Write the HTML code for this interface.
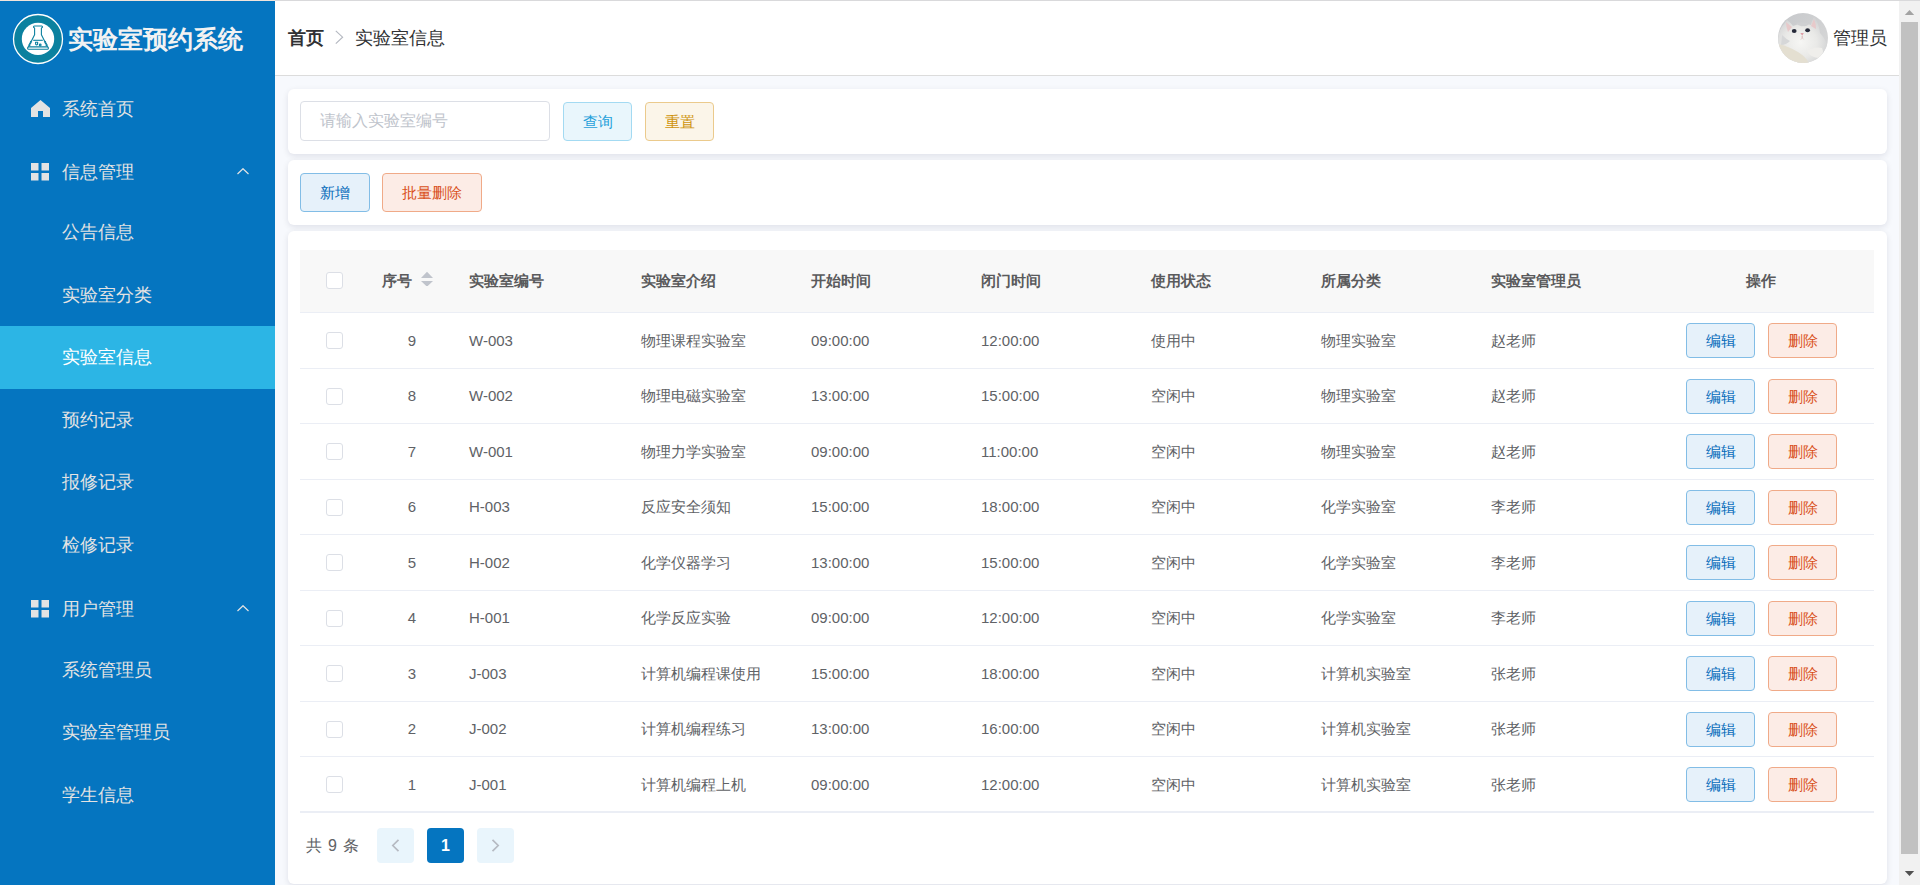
<!DOCTYPE html>
<html><head><meta charset="utf-8">
<style>
*{box-sizing:border-box;margin:0;padding:0}
html,body{width:1920px;height:885px;overflow:hidden;font-family:"Liberation Sans",sans-serif;background:#f7f9fd}
.abs{position:absolute}
#topline{position:absolute;left:0;top:0;width:1920px;height:1px;background:#d9d9db;z-index:10}
#topline .l{position:absolute;left:0;top:0;width:275px;height:1px;background:#f1e4dc}
#side{position:absolute;left:0;top:0;width:275px;height:885px;background:#0575c0}
.logo{position:absolute;left:13px;top:14px;width:50px;height:50px;border-radius:50%;background:#0b7f9f;border:1.5px solid #fff}
.logo .in{position:absolute;left:8px;top:8px;width:32px;height:32px;border-radius:50%;background:#fff}
.logotxt{position:absolute;left:68px;top:20px;font-size:25px;font-weight:bold;color:#f2f2f2;line-height:38px;white-space:nowrap}
.mi{position:absolute;left:0;width:275px;height:63px;color:#e3e3e3;font-size:18px;line-height:63px;white-space:nowrap}
.mi span{position:absolute;left:62px;top:0}
.mi.act{background:#2cb5e5;color:#fff}
.mi svg{position:absolute}
#header{position:absolute;left:275px;top:0;width:1624px;height:76px;background:#fff;border-bottom:1px solid #dcdcdc}
.bc1{position:absolute;left:13px;top:19px;font-size:18px;font-weight:bold;color:#303133;line-height:38px}
.bc2{position:absolute;left:80px;top:19px;font-size:18px;color:#303133;line-height:38px}
.card{position:absolute;left:288px;width:1599px;background:#fff;border-radius:6px;box-shadow:0 2px 6px rgba(10,10,50,0.1)}
.btn{position:absolute;height:39px;border-width:1px;border-style:solid;border-radius:4px;font-size:15px;text-align:center;line-height:37px;white-space:nowrap}
.b-cyan{background:#e9f6fc;border-color:#a3daf2;color:#1fa0da}
.b-yel{background:#fbf5e9;border-color:#ebca8c;color:#cf930c}
.b-blue{background:#e6f1fa;border-color:#82bde6;color:#066cba}
.b-red{background:#fcece6;border-color:#f0aa88;color:#d9501a}

.tbl{position:absolute;left:300px;top:0;width:1574px;height:885px}
.thead{position:absolute;left:0;top:250px;width:1574px;height:63px;background:#f8f8f8;border-bottom:1px solid #ebeef5}
.th{position:absolute;top:0;line-height:62px;font-size:15px;font-weight:bold;color:#5a5a5c;white-space:nowrap}
.tr{position:absolute;left:0;width:1574px;border-bottom:1px solid #ebeef5}
.td{position:absolute;top:0;font-size:15px;color:#606266;white-space:nowrap}
.td.num{left:82px;width:60px;text-align:center}
.cb{position:absolute;width:17px;height:17px;border:1px solid #dcdfe6;border-radius:3px;background:#fff}
.btn2{position:absolute;width:69px;height:35px;border-width:1px;border-style:solid;border-radius:4px;font-size:15px;text-align:center;line-height:33px;white-space:nowrap}
.pg{position:absolute;top:828px;width:37px;height:35px;border-radius:4px;background:#e9f5fc}
#scroll{position:absolute;left:1899px;top:1px;width:21px;height:884px;background:#f1f1f1}
#thumb{position:absolute;left:2px;top:21px;width:17px;height:832px;background:#c1c1c1}
</style></head><body>
<div id="topline"><div class="l"></div></div>
<div id="side">
  <svg class="abs" style="left:0;top:0" width="80" height="80" viewBox="0 0 80 80">
<circle cx="38" cy="39" r="24.5" fill="#0b819f" stroke="#fff" stroke-width="1.3"/>
<circle cx="38" cy="38.9" r="16.2" fill="#fff"/>
<g fill="none" stroke="#0b819f" stroke-width="1.1" stroke-linejoin="round">
<path d="M34.4 26 L41.6 26 Q42.7 26.2 42.4 27.3 L41.4 28.1 L41.4 34.8 L47.6 46.9 M34.4 26 Q33.3 26.2 33.6 27.3 L34.6 28.1 L34.6 34.8 L28.4 46.9"/>
<rect x="27.6" y="46.9" width="20.8" height="2.4" rx="1"/>
<path d="M33.2 40.3 L42.8 40.3"/>
<path d="M35.5 42.3 L37.7 42.3 L37.5 44.4 Q36.6 45.3 35.7 44.4 Z"/>
<circle cx="40.2" cy="45" r="0.9"/>
</g>
<g stroke="#0b819f" stroke-width="2.2" stroke-dasharray="1.1 0.9">
<path d="M31.3 41.2 L29 45.9"/>
<path d="M44.7 41.2 L47 45.9"/>
</g>
</svg>
  <div class="logotxt">实验室预约系统</div>
  <div class="mi" style="top:78px"><svg style="left:31px;top:22px" width="19" height="18" viewBox="0 0 19 18"><path d="M9.5 0 L19 8 L19 17 L12 17 L12 11 L7 11 L7 17 L0 17 L0 8 Z" fill="#e3e3e3"/></svg><span>系统首页</span></div>
  <div class="mi" style="top:141px"><svg style="left:31px;top:22px" width="19" height="18" viewBox="0 0 19 18"><rect x="0" y="0" width="7.5" height="7.5" fill="#e3e3e3"/><rect x="10.5" y="0" width="7.5" height="7.5" fill="#e3e3e3"/><rect x="0" y="10" width="7.5" height="7.5" fill="#e3e3e3"/><rect x="10.5" y="10" width="7.5" height="7.5" fill="#e3e3e3"/></svg><span>信息管理</span><svg style="left:237px;top:27px" width="12" height="7" viewBox="0 0 12 7"><path d="M0.5 6 L6 0.7 L11.5 6" stroke="#e3e3e3" stroke-width="1.2" fill="none"/></svg></div>
  <div class="mi" style="top:201px"><span>公告信息</span></div>
  <div class="mi" style="top:264px"><span>实验室分类</span></div>
  <div class="mi act" style="top:326px"><span>实验室信息</span></div>
  <div class="mi" style="top:389px"><span>预约记录</span></div>
  <div class="mi" style="top:451px"><span>报修记录</span></div>
  <div class="mi" style="top:514px"><span>检修记录</span></div>
  <div class="mi" style="top:578px"><svg style="left:31px;top:22px" width="19" height="18" viewBox="0 0 19 18"><rect x="0" y="0" width="7.5" height="7.5" fill="#e3e3e3"/><rect x="10.5" y="0" width="7.5" height="7.5" fill="#e3e3e3"/><rect x="0" y="10" width="7.5" height="7.5" fill="#e3e3e3"/><rect x="10.5" y="10" width="7.5" height="7.5" fill="#e3e3e3"/></svg><span>用户管理</span><svg style="left:237px;top:27px" width="12" height="7" viewBox="0 0 12 7"><path d="M0.5 6 L6 0.7 L11.5 6" stroke="#e3e3e3" stroke-width="1.2" fill="none"/></svg></div>
  <div class="mi" style="top:639px"><span>系统管理员</span></div>
  <div class="mi" style="top:701px"><span>实验室管理员</span></div>
  <div class="mi" style="top:764px"><span>学生信息</span></div>
</div>
<div id="header">
  <div class="bc1">首页</div>
  <div class="bc2">实验室信息</div>
  <svg class="abs" style="left:60px;top:30px" width="9" height="15" viewBox="0 0 9 15"><path d="M0.8 0.8 L7.6 7.2 L0.8 13.6" stroke="#b4b8c0" stroke-width="1.15" fill="none"/></svg>
  <svg class="abs" style="left:1503px;top:13px" width="50" height="50" viewBox="0 0 50 50">
   <defs><clipPath id="cc"><circle cx="25" cy="25" r="25"/></clipPath>
   <radialGradient id="face" cx="0.45" cy="0.55" r="0.55"><stop offset="0" stop-color="#f6f6f4"/><stop offset="0.6" stop-color="#e9e9e7"/><stop offset="1" stop-color="#d4d5d6"/></radialGradient>
   <linearGradient id="bg" x1="0" y1="0" x2="1" y2="1"><stop offset="0" stop-color="#c6c8cb"/><stop offset="1" stop-color="#d9d9d9"/></linearGradient></defs>
   <g clip-path="url(#cc)">
    <rect width="50" height="50" fill="url(#bg)"/>
    <path d="M0 26 Q1 16 6 11 L9 7 Q12 9 15 13 Q24 9 33 12 Q34 7 36 4 Q41 10 42 20 Q50 28 50 40 L50 50 L0 50 Z" fill="url(#face)"/>
    <path d="M18 10 Q25 8 31 11 Q28 14 25 13 Q21 14 18 10 Z" fill="#cfd0d2"/>
    <path d="M4 22 Q8 26 12 28 Q8 32 3 32 Z" fill="#d6d7d8"/>
    <path d="M8 9 L14 14 L10 19 Q8 14 8 9 Z" fill="#e7c9ca"/>
    <path d="M36 6 L33 13 L38 16 Q38 10 36 6 Z" fill="#e7c9ca"/>
    <path d="M0 31 Q10 33 20 39 Q28 44 31 50 L0 50 Z" fill="#e4dfd1"/>
    <path d="M29 38 Q37 33 44 35 Q47 41 41 45 Q33 45 29 38 Z" fill="#efeeeb"/>
    <ellipse cx="16.2" cy="18" rx="2.4" ry="2" fill="#262a3a"/>
    <ellipse cx="29.6" cy="17.2" rx="2.4" ry="2" fill="#262a3a"/>
    <path d="M22.3 20 L25.9 20 L24.2 22.8 Z" fill="#dea0a8"/>
    <path d="M24.2 23 Q24 26 22.8 26.6 M24.2 23 Q24.5 26 25.6 26.4" stroke="#d9b4b4" stroke-width="0.6" fill="none"/>
   </g>
  </svg>
  <div class="abs" style="left:1558px;top:19px;font-size:18px;line-height:38px;color:#303133;white-space:nowrap">管理员</div>
</div>
<div class="card" style="top:89px;height:65px">
  <div class="abs" style="left:12px;top:12px;width:250px;height:40px;border:1px solid #dcdfe6;border-radius:4px"><span class="abs" style="left:19px;top:9px;font-size:16px;color:#c0c4cc;line-height:20px;white-space:nowrap">请输入实验室编号</span></div>
  <div class="btn b-cyan" style="left:275px;top:13px;width:69px">查询</div>
  <div class="btn b-yel" style="left:357px;top:13px;width:69px">重置</div>
</div>
<div class="card" style="top:160px;height:65px">
  <div class="btn b-blue" style="left:12px;top:13px;width:70px">新增</div>
  <div class="btn b-red" style="left:94px;top:13px;width:100px">批量删除</div>
</div>
<div class="card" style="top:231px;height:653px"></div>
<div class="tbl">
<div class="thead">
<div class="cb" style="left:26px;top:22px"></div>
<span class="th" style="left:82px">序号</span>
<svg class="abs" style="left:121px;top:21px" width="12" height="15" viewBox="0 0 12 15"><path d="M6 0.8 L12 6.9 L0 6.9 Z M0 9.9 L12 9.9 L6 15.7 Z" fill="#c0c4cc"/></svg>
<span class="th" style="left:169px">实验室编号</span>
<span class="th" style="left:341px">实验室介绍</span>
<span class="th" style="left:511px">开始时间</span>
<span class="th" style="left:681px">闭门时间</span>
<span class="th" style="left:851px">使用状态</span>
<span class="th" style="left:1021px">所属分类</span>
<span class="th" style="left:1191px">实验室管理员</span>
<span class="th" style="left:1446px">操作</span>
</div>
<div class="tr" style="top:313px;height:56px">
<div class="cb" style="left:26px;top:19px"></div>
<span class="td num" style="line-height:55px">9</span>
<span class="td" style="left:169px;line-height:55px">W-003</span>
<span class="td" style="left:341px;line-height:55px">物理课程实验室</span>
<span class="td" style="left:511px;line-height:55px">09:00:00</span>
<span class="td" style="left:681px;line-height:55px">12:00:00</span>
<span class="td" style="left:851px;line-height:55px">使用中</span>
<span class="td" style="left:1021px;line-height:55px">物理实验室</span>
<span class="td" style="left:1191px;line-height:55px">赵老师</span>
<div class="btn2 b-blue" style="left:1386px;top:10px">编辑</div>
<div class="btn2 b-red" style="left:1468px;top:10px">删除</div>
</div>
<div class="tr" style="top:369px;height:55px">
<div class="cb" style="left:26px;top:19px"></div>
<span class="td num" style="line-height:54px">8</span>
<span class="td" style="left:169px;line-height:54px">W-002</span>
<span class="td" style="left:341px;line-height:54px">物理电磁实验室</span>
<span class="td" style="left:511px;line-height:54px">13:00:00</span>
<span class="td" style="left:681px;line-height:54px">15:00:00</span>
<span class="td" style="left:851px;line-height:54px">空闲中</span>
<span class="td" style="left:1021px;line-height:54px">物理实验室</span>
<span class="td" style="left:1191px;line-height:54px">赵老师</span>
<div class="btn2 b-blue" style="left:1386px;top:10px">编辑</div>
<div class="btn2 b-red" style="left:1468px;top:10px">删除</div>
</div>
<div class="tr" style="top:424px;height:56px">
<div class="cb" style="left:26px;top:19px"></div>
<span class="td num" style="line-height:55px">7</span>
<span class="td" style="left:169px;line-height:55px">W-001</span>
<span class="td" style="left:341px;line-height:55px">物理力学实验室</span>
<span class="td" style="left:511px;line-height:55px">09:00:00</span>
<span class="td" style="left:681px;line-height:55px">11:00:00</span>
<span class="td" style="left:851px;line-height:55px">空闲中</span>
<span class="td" style="left:1021px;line-height:55px">物理实验室</span>
<span class="td" style="left:1191px;line-height:55px">赵老师</span>
<div class="btn2 b-blue" style="left:1386px;top:10px">编辑</div>
<div class="btn2 b-red" style="left:1468px;top:10px">删除</div>
</div>
<div class="tr" style="top:480px;height:55px">
<div class="cb" style="left:26px;top:19px"></div>
<span class="td num" style="line-height:54px">6</span>
<span class="td" style="left:169px;line-height:54px">H-003</span>
<span class="td" style="left:341px;line-height:54px">反应安全须知</span>
<span class="td" style="left:511px;line-height:54px">15:00:00</span>
<span class="td" style="left:681px;line-height:54px">18:00:00</span>
<span class="td" style="left:851px;line-height:54px">空闲中</span>
<span class="td" style="left:1021px;line-height:54px">化学实验室</span>
<span class="td" style="left:1191px;line-height:54px">李老师</span>
<div class="btn2 b-blue" style="left:1386px;top:10px">编辑</div>
<div class="btn2 b-red" style="left:1468px;top:10px">删除</div>
</div>
<div class="tr" style="top:535px;height:56px">
<div class="cb" style="left:26px;top:19px"></div>
<span class="td num" style="line-height:55px">5</span>
<span class="td" style="left:169px;line-height:55px">H-002</span>
<span class="td" style="left:341px;line-height:55px">化学仪器学习</span>
<span class="td" style="left:511px;line-height:55px">13:00:00</span>
<span class="td" style="left:681px;line-height:55px">15:00:00</span>
<span class="td" style="left:851px;line-height:55px">空闲中</span>
<span class="td" style="left:1021px;line-height:55px">化学实验室</span>
<span class="td" style="left:1191px;line-height:55px">李老师</span>
<div class="btn2 b-blue" style="left:1386px;top:10px">编辑</div>
<div class="btn2 b-red" style="left:1468px;top:10px">删除</div>
</div>
<div class="tr" style="top:591px;height:55px">
<div class="cb" style="left:26px;top:19px"></div>
<span class="td num" style="line-height:54px">4</span>
<span class="td" style="left:169px;line-height:54px">H-001</span>
<span class="td" style="left:341px;line-height:54px">化学反应实验</span>
<span class="td" style="left:511px;line-height:54px">09:00:00</span>
<span class="td" style="left:681px;line-height:54px">12:00:00</span>
<span class="td" style="left:851px;line-height:54px">空闲中</span>
<span class="td" style="left:1021px;line-height:54px">化学实验室</span>
<span class="td" style="left:1191px;line-height:54px">李老师</span>
<div class="btn2 b-blue" style="left:1386px;top:10px">编辑</div>
<div class="btn2 b-red" style="left:1468px;top:10px">删除</div>
</div>
<div class="tr" style="top:646px;height:56px">
<div class="cb" style="left:26px;top:19px"></div>
<span class="td num" style="line-height:55px">3</span>
<span class="td" style="left:169px;line-height:55px">J-003</span>
<span class="td" style="left:341px;line-height:55px">计算机编程课使用</span>
<span class="td" style="left:511px;line-height:55px">15:00:00</span>
<span class="td" style="left:681px;line-height:55px">18:00:00</span>
<span class="td" style="left:851px;line-height:55px">空闲中</span>
<span class="td" style="left:1021px;line-height:55px">计算机实验室</span>
<span class="td" style="left:1191px;line-height:55px">张老师</span>
<div class="btn2 b-blue" style="left:1386px;top:10px">编辑</div>
<div class="btn2 b-red" style="left:1468px;top:10px">删除</div>
</div>
<div class="tr" style="top:702px;height:55px">
<div class="cb" style="left:26px;top:19px"></div>
<span class="td num" style="line-height:54px">2</span>
<span class="td" style="left:169px;line-height:54px">J-002</span>
<span class="td" style="left:341px;line-height:54px">计算机编程练习</span>
<span class="td" style="left:511px;line-height:54px">13:00:00</span>
<span class="td" style="left:681px;line-height:54px">16:00:00</span>
<span class="td" style="left:851px;line-height:54px">空闲中</span>
<span class="td" style="left:1021px;line-height:54px">计算机实验室</span>
<span class="td" style="left:1191px;line-height:54px">张老师</span>
<div class="btn2 b-blue" style="left:1386px;top:10px">编辑</div>
<div class="btn2 b-red" style="left:1468px;top:10px">删除</div>
</div>
<div class="tr" style="top:757px;height:56px">
<div class="cb" style="left:26px;top:19px"></div>
<span class="td num" style="line-height:55px">1</span>
<span class="td" style="left:169px;line-height:55px">J-001</span>
<span class="td" style="left:341px;line-height:55px">计算机编程上机</span>
<span class="td" style="left:511px;line-height:55px">09:00:00</span>
<span class="td" style="left:681px;line-height:55px">12:00:00</span>
<span class="td" style="left:851px;line-height:55px">空闲中</span>
<span class="td" style="left:1021px;line-height:55px">计算机实验室</span>
<span class="td" style="left:1191px;line-height:55px">张老师</span>
<div class="btn2 b-blue" style="left:1386px;top:10px">编辑</div>
<div class="btn2 b-red" style="left:1468px;top:10px">删除</div>
</div>
<div class="abs" style="left:0;top:811px;width:1574px;height:1px;background:#ebeef5"></div>
</div>
<span class="abs" style="left:306px;top:834px;font-size:16px;line-height:24px;color:#606266;white-space:nowrap;word-spacing:1.5px">共 9 条</span>
<div class="pg" style="left:377px"><svg class="abs" style="left:14px;top:11px" width="9" height="13" viewBox="0 0 9 13"><path d="M7.5 0.8 L1.8 6.5 L7.5 12.2" stroke="#b6bac2" stroke-width="1.7" fill="none"/></svg></div>
<div class="pg" style="left:427px;background:#0575c0;color:#fff;font-weight:bold;font-size:16px;text-align:center;line-height:35px">1</div>
<div class="pg" style="left:477px"><svg class="abs" style="left:14px;top:11px" width="9" height="13" viewBox="0 0 9 13"><path d="M1.5 0.8 L7.2 6.5 L1.5 12.2" stroke="#b6bac2" stroke-width="1.7" fill="none"/></svg></div>
<div id="scroll"><div id="thumb"></div>
<svg class="abs" style="left:0;top:0" width="21" height="884" viewBox="0 0 21 884"><path d="M10.5 9 L15.2 14 L5.8 14 Z" fill="#a3a3a3"/><path d="M5.8 870 L15.2 870 L10.5 875 Z" fill="#505050"/></svg></div>
</body></html>
